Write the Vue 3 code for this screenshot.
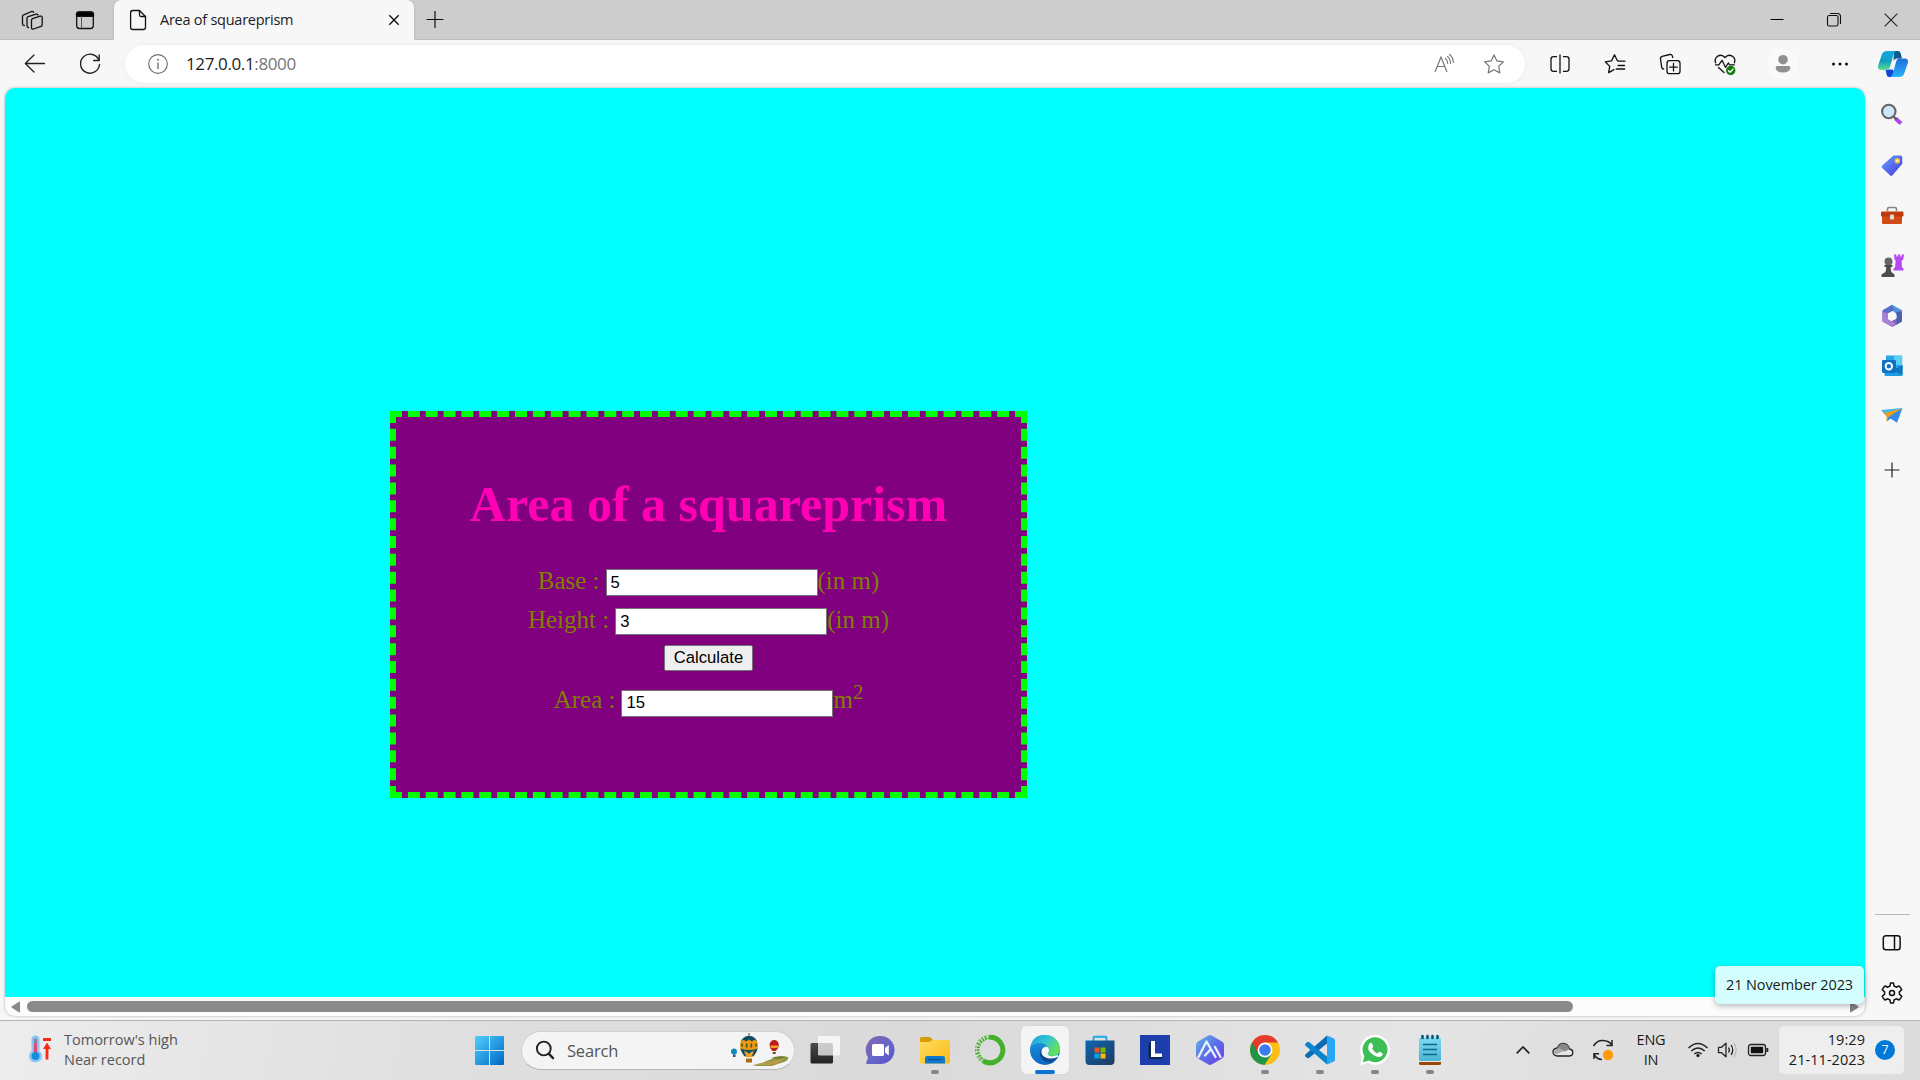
<script setup>
import { ref } from 'vue'

const base = ref('5')
const height = ref('3')
const area = ref('15')

function calculate() {
  area.value = String(Number(base.value) * Number(height.value))
}
</script>

<template>
  <div class="screen">
    <header class="titlebar">
      <div class="cell cell-ws">
        <svg width="32" height="32" fill="none" stroke="#111" stroke-width="1.3" stroke-linejoin="round" stroke-linecap="round">
          <path d="M16.500 14.700L24.200 12.200q2-.5 2 1.200v7.300q0 1.200-1.200 1.600L17.500 25q-2 .5-2-1.200V16.500q0-1.300 1-1.800Z" />
          <path d="M12.500 23.500q-1.500 0-1.500-1.500v-7.700q0-1.200 1.200-1.600l7.800-2.500q1.500-.3 2 .8" />
          <path d="M8.300 21.500q-1.800 0-1.800-1.500v-7.500q0-1.200 1.200-1.600L15.500 7.500q1.500-.3 2 .8" />
        </svg>
      </div>
      <div class="cell cell-tabs">
        <svg width="32" height="32" fill="none" stroke="#111" stroke-width="1.300">
          <rect x="7.700" y="8.200" width="16.600" height="16.300" rx="2.800" />
          <path d="M7.500 12.300V10.500q0-2.500 2.500-2.500h12q2.500 0 2.500 2.500v1.800z" fill="#000" />
          <path d="M12.500 12v12.500" stroke="#555" stroke-width="1" />
        </svg>
      </div>
      <div class="tab">
        <svg width="18" height="22" fill="none" stroke="#111" stroke-width="1.300" stroke-linejoin="round">
          <path d="M3.800 1.500H10.500L16.500 7.500V18.300q0 2.200-2.200 2.200H3.800q-2.200 0-2.200-2.200V3.700q0-2.200 2.200-2.200ZM10.500 1.700V6q0 1.500 1.500 1.500h4.300" />
        </svg>
        <span class="tab-title">Area of squareprism</span>
        <svg width="12" height="12" stroke="#111" stroke-width="1.400"><path d="M1.300 1.300l9.400 9.400M10.700 1.300L1.300 10.700" /></svg>
      </div>
      <div class="cell cell-new">
        <svg width="20" height="20" stroke="#111" stroke-width="1.200"><path d="M1.500 9.500h17M10 1v17" /></svg>
      </div>
      <div class="window-buttons">
        <div class="cell"><svg width="14" height="14" stroke="#000" stroke-width="1"><path d="M.5 6.500h13" /></svg></div>
        <div class="cell">
          <svg width="16" height="16" fill="none" stroke="#111" stroke-width="1.100"><rect x="1.500" y="3.500" width="10.500" height="10.500" rx="1.800" /><path d="M4 1.500h7.500q3 0 3 3V12" /></svg>
        </div>
        <div class="cell"><svg width="14" height="14" stroke="#222" stroke-width="1.100"><path d="M.7.7l12.600 12.600M13.300.7L.7 13.300" /></svg></div>
      </div>
    </header>

    <nav class="toolbar">
      <div class="cell">
        <svg width="32" height="32" fill="none" stroke="#222" stroke-width="1.300" stroke-linecap="round" stroke-linejoin="round"><path d="M25.500 15.500H6.500M15 7L6.300 15.500l8.700 8.500" /></svg>
      </div>
      <div class="cell">
        <svg width="32" height="32" fill="none" stroke="#222" stroke-width="1.400" stroke-linecap="round" stroke-linejoin="round"><path d="M25 12.500A9.500 9.500 0 1 0 25.500 16.500M25.200 7v5.500h-5.500" /></svg>
      </div>
      <div class="address">
        <svg width="22" height="22" fill="none" stroke="#707070" stroke-width="1.200"><circle cx="11" cy="11" r="9.300" /><path d="M11 9.500V16" stroke-width="1.400" /><circle cx="11" cy="6.700" r="1" fill="#707070" stroke="none" /></svg>
        <span class="url">127.0.0.1<span class="port">:8000</span></span>
        <svg class="read" width="22" height="22" fill="none" stroke="#767676" stroke-width="1.200" stroke-linecap="round"><path d="M2.200 18.500L8 4l5.800 14.500M4.200 13.500h7.700" /><path d="M12.500 5.500q2.200 1.800 2.300 5M14.500 3.500q3 2.400 3 7M16.500 1.500q3.800 2.700 3.800 8" stroke-width="1.100" /></svg>
        <svg width="22" height="22" fill="none" stroke="#767676" stroke-width="1.200" stroke-linejoin="round"><path d="M11 2l2.900 5.900 6.500.9-4.700 4.600 1.100 6.500L11 16.800 5.200 19.900l1.100-6.500L1.600 8.800l6.500-.9z" /></svg>
      </div>
      <div class="cell split">
        <svg width="32" height="32" fill="none" stroke="#111" stroke-width="1.300"><path d="M13 8.700H9.500q-2.500 0-2.500 2.500v9.600q0 2.500 2.500 2.500H13M19 8.700h3.500q2.500 0 2.500 2.500v9.600q0 2.500-2.500 2.500H19M16 6.500v19" /></svg>
      </div>
      <div class="cell">
        <svg width="32" height="32" fill="none" stroke="#111" stroke-width="1.300" stroke-linejoin="round" stroke-linecap="round"><path d="M15 21.600l-5.300 3 1-6.200L6.300 13.800l6.200-.9L15.500 6.800l2.500 5.200 1.200 1.200H26M19.200 17.500h6.300M17.200 21h8.500" /></svg>
      </div>
      <div class="cell">
        <svg width="32" height="32" fill="none" stroke="#111" stroke-width="1.300" stroke-linecap="round"><rect x="13" y="12.700" width="13" height="13" rx="2.500" /><path d="M19.500 15.500v7.400M15.800 19.200h7.400M9.700 21q-1.700 0-2-1.700L6.500 11q-.3-2.200 1.700-2.700l7.600-1.800q2-.3 2.600 1.600l.4 1.400" /></svg>
      </div>
      <div class="cell">
        <svg width="32" height="32" fill="none" stroke="#111" stroke-width="1.300" stroke-linejoin="round" stroke-linecap="round"><path d="M6.600 14.800C4.500 9 11.500 4.500 16 9.500 20.500 4.500 27.500 9 25.400 14.800M6.500 16.800h3.300l3.200-4.500 3.500 7 2.800-4.300 1.300 1.800h4.800M9.500 19.500l5.500 5" /><circle cx="21.700" cy="22.500" r="4.700" fill="#107c10" stroke="none" /><path d="M19.500 22.700l1.600 1.500 2.900-3" stroke="#fff" /></svg>
      </div>
      <div class="cell avatar">
        <svg width="30" height="30"><circle cx="15" cy="15" r="14" fill="#f9f9f9" stroke="#fff" /><circle cx="15" cy="10.700" r="4.800" fill="#909090" /><path d="M9 17h12q1.500 0 1.300 2-.8 4.500-7.300 4.500T7.700 19q-.2-2 1.300-2z" fill="#909090" /></svg>
      </div>
      <div class="cell dots"><svg width="20" height="6" fill="#111"><circle cx="3.500" cy="3" r="1.500" /><circle cx="10" cy="3" r="1.500" /><circle cx="16.500" cy="3" r="1.500" /></svg></div>
      <div class="cell copilot">
        <svg width="32" height="28">
          <defs>
            <linearGradient id="cpA" x1="0" y1="0" x2="0" y2="1"><stop offset="0" stop-color="#16a6e0" /><stop offset=".55" stop-color="#129fc0" /><stop offset="1" stop-color="#5fdd8c" /></linearGradient>
            <linearGradient id="cpB" x1="0" y1="0" x2="0" y2="1"><stop offset="0" stop-color="#1c6fd8" /><stop offset="1" stop-color="#2bb4fb" /></linearGradient>
          </defs>
          <path d="M17 1h4q2 0 2.600 2L25 8.500h-5.500q-2 0-3 2.500z" fill="#0a5c91" />
          <path d="M8.500 19.500h7l3 4-2 3.500h-4.500q-1.800 0-2.300-2z" fill="#1646d8" />
          <path d="M10 1h8.500q-1.300 1-2 3.500L13 17q-.8 3-3 3H4.500Q0 20 1.200 15.500L4.800 4.500Q6 1 10 1z" fill="url(#cpA)" />
          <path d="M22 8.500h5.500q4.500 0 3.300 4.500l-3.600 10.500Q26 27 22 27h-8.500q1.500-1 2.300-3.500L19.200 11.500q.8-3 2.800-3z" fill="url(#cpB)" />
        </svg>
      </div>
    </nav>

    <main class="body">
      <section class="viewport">
        <div class="page">
          <form class="box" @submit.prevent="calculate">
            <h1>Area of a squareprism</h1>
            <div class="row row-base"><span class="label">Base :</span><input v-model="base" /><span>(in m)</span></div>
            <div class="row row-height"><span class="label">Height :</span><input v-model="height" /><span>(in m)</span></div>
            <div class="row row-button"><button type="submit">Calculate</button></div>
            <div class="row row-area"><span class="label">Area :</span><input v-model="area" /><span>m<sup>2</sup></span></div>
          </form>
        </div>
        <div class="scrollbar">
          <svg width="9" height="12" fill="#8a8a8a"><path d="M9 .5v11L7.500 11 .5 6.500v-1L7.500 1z" /></svg>
          <div class="thumb"></div>
          <svg width="9" height="12" fill="#83838a"><path d="M0 .5v11L1.500 11l7-4.500v-1L1.500 1z" /></svg>
        </div>
      </section>

      <aside class="sidebar">
        <div class="cell"><svg width="24" height="24">
          <path d="M15.500 15.500l5.500 5" stroke="#b244f0" stroke-width="4" /><path d="M13.500 13.500l3 3" stroke="#555" stroke-width="2" /><circle cx="8.800" cy="8.500" r="6.700" fill="#cfe6fa" stroke="#666" stroke-width="2.100" /></svg></div>
        <div class="cell"><svg width="24" height="24">
          <defs><linearGradient id="tg" x1="0" y1="0" x2="1" y2="1"><stop offset="0" stop-color="#6aa2ff" /><stop offset="1" stop-color="#4238e0" /></linearGradient></defs>
          <path d="M13.500 1.500h6.800q2 0 2 2v6.300L12.500 21.300q-1.300 1.200-2.500 0L2.200 14q-1.300-1.300 0-2.500z" fill="url(#tg)" /><circle cx="17.300" cy="6.700" r="2" fill="#f5f5ff" stroke="#f0c420" stroke-width="1.600" /></svg></div>
        <div class="cell"><svg width="24" height="24">
          <path d="M7.500 7V5q0-1.500 1.500-1.500h6q1.500 0 1.500 1.500v2" fill="none" stroke="#868686" stroke-width="1.600" /><rect x="2" y="9" width="20" height="11" rx="1.300" fill="#d24a16" /><rect x="1" y="7.500" width="22.500" height="5" rx="1.200" fill="#c0390d" /><rect x="10" y="10.500" width="4" height="5" rx="1" fill="#ddd" /></svg></div>
        <div class="cell"><svg width="24" height="24">
          <path d="M14 .5h2.300v2h1.500v-2h2.300v2h1.500v-2H24l-.8 5-1.700 1.300.5 6.700 1.500 1v2H13.500v-2l1.500-1 .7-6.700L14.500 5.500z" fill="#b548f2" /><circle cx="8.500" cy="7.500" r="4" fill="#666" /><path d="M4.500 11h8v1.500l-2 1 .8 4.500 3.200 2.500V23H1.500v-2.500L5.500 18l.9-4.500-2-1z" fill="#4c4c4c" /></svg></div>
        <div class="cell"><svg width="24" height="24">
          <path d="M12 .8L21.700 6v8.300l-5.400-3-3.500-5L7 9.500v-5z" fill="#4d96df" /><path d="M12 .8L2.500 6.200v10.500L7.500 19.200V9.500L14.500 6z" fill="#5a6ecb" /><path d="M21.900 6.500v11L12.500 22.900 3 17.500l5-1.500 3.500 1.300 5.400-3V7.700z" fill="#8065bb" /><path d="M2.200 8v9.500L12 22.900l3.500-3.300L8 15.300V9z" fill="#a880d5" /><path d="M21.900 8v9.500L16.500 20.700V8z" fill="#4a62ad" /><circle cx="12.500" cy="12" r="4" fill="#f7f7f7" /></svg></div>
        <div class="cell"><svg width="24" height="24">
          <path d="M6 1.500h15.500q.7 0 .7.700V20H6z" fill="#28a8ea" /><path d="M14 2h8v9h-8z" fill="#5bd0f6" /><path d="M4.500 11l9.500 4 8.500-4v10q0 1-1 1h-16q-1 0-1-1z" fill="#1b9ce5" /><path d="M12 16.500l10.500-5.500V21z" fill="#1278be" /><rect x="2" y="6" width="14" height="13" rx="1.400" fill="#0f70c5" /><circle cx="8.800" cy="12.300" r="3.200" fill="none" stroke="#fff" stroke-width="2" /></svg></div>
        <div class="cell"><svg width="24" height="24">
          <path d="M1 6l21.500-2L7 13z" fill="#44b6f2" /><path d="M1 6l5.500 5.500V18l3-4 12-9.500L5 9z" fill="#f49d12" /><path d="M22.500 4L17 18.800l-6.500-4.300-3.500 3 1.500-4.500z" fill="#3389f0" /></svg></div>
        <div class="cell plus"><svg width="16" height="16" stroke="#222" stroke-width="1.200"><path d="M.5 8h15M8 .5v15" /></svg></div>
        <div class="spacer"></div>
        <div class="divider"></div>
        <div class="cell pane"><svg width="22" height="18" fill="none" stroke="#111" stroke-width="1.500"><rect x="2.300" y="1.800" width="16.800" height="14" rx="2.500" /><path d="M13.500 2v14" /></svg></div>
        <div class="cell gear"><svg width="24" height="24" fill="none" stroke="#111" stroke-width="1.500" stroke-linejoin="round"><circle cx="12" cy="12" r="2.500" /><path d="M10 5l.5-3h3l.5 3 2.200 1.200 2.800-1.200 1.500 1.500 1.200 2.200-2.300 2.200v2.200l2.300 2.200-1.200 2.200-1.500 1.500-2.800-1.200L14 19l-.5 3h-3L10 19l-2.200-1.200L5 19l-1.500-1.500-1.200-2.200 2.300-2.200v-2.200L2.300 8.700l1.200-2.200L5 5l2.800 1.200z" /></svg></div>
      </aside>
    </main>

    <footer class="taskbar">
      <div class="weather">
        <svg width="24" height="30">
          <path d="M3.500 5.500a4 4 0 0 1 8 0V17a6.500 6.500 0 1 1-8 0z" fill="#8fc4f7" /><path d="M7.500 7v13" stroke="#e24a70" stroke-width="3.200" stroke-linecap="round" /><path d="M7.500 4.500v5" stroke="#8a83a8" stroke-width="3.200" /><circle cx="7.500" cy="22" r="4" fill="#148fdd" /><path d="M15 5.500h8M19 25.500V13" stroke="#fb2a14" stroke-width="2.800" stroke-linecap="butt" /><path d="M19 8.500l4 6.500h-8z" fill="#fb2a14" />
        </svg>
        <div class="weather-text"><span>Tomorrow's high</span><span>Near record</span></div>
      </div>

      <div class="start">
        <svg width="29" height="29">
          <defs><linearGradient id="win" gradientUnits="userSpaceOnUse" x1="0" y1="0" x2="29" y2="29"><stop offset="0" stop-color="#4fd0fd" /><stop offset="1" stop-color="#0067c4" /></linearGradient></defs>
          <path d="M1 0h13v14H0V1q0-1 1-1zM15 0h13q1 0 1 1v13H15zM0 15h14v14H1q-1 0-1-1zM15 15h14v13q0 1-1 1H15z" fill="url(#win)" />
        </svg>
      </div>

      <div class="search">
        <svg width="20" height="20" fill="none" stroke="#222" stroke-width="1.900" stroke-linecap="round"><circle cx="8.800" cy="8.500" r="6.900" /><path d="M13.700 13.700l4.300 4.500" stroke-width="2.400" /></svg>
        <span>Search</span>
        <svg class="balloons" width="58" height="34">
          <path d="M18 33q9 0 15-4l10-4q8-3 14-1 1 3-4 5l-12 4z" fill="#8c9b3f" /><path d="M30 30q12-1 24-6-5 7-14 8H22z" fill="#b99a4a" /><path d="M40 25q8-3 15-1l-6 2z" fill="#6f7a2e" />
          <circle cx="3" cy="18.500" r="3" fill="#1686c0" /><path d="M2 21.500h2.500V24H2z" fill="#1a5a88" />
          <path d="M9 12.500a9 9.500 0 0 1 18 0q0 5-5 11.500h-8q-5-6.500-5-11.500z" fill="#f0960f" /><path d="M10 8.500Q12 3 18 3t8 5.500l-2.500-2-2.500 2-3-2-3 2-2.500-2z" fill="#0b4b63" /><path d="M9.300 15.500q9 3 17.400 0-1 4-4 7.500h-9.400q-3-3.500-4-7.500z" fill="#0d5169" /><path d="M13 18l2 5h6l2-5-2.500.8-2.500 2-2.500-2z" fill="#f0a020" /><path d="M11 10.500v3M15.700 10.500v4M20.300 10.500v4M25 10.500v3" stroke="#376329" stroke-width="1.600" /><path d="M18 0v3" stroke="#443" /><path d="M15 25.500h6v4h-6z" fill="#a86c12" />
          <path d="M38.500 12a4.700 5 0 0 1 9.400 0q0 3-3 6h-3.500q-3-3-2.900-6z" fill="#b91d1d" /><path d="M39 12.500h8.500l-1 2.500h-6.600z" fill="#f0a120" /><path d="M41.700 19h3v2h-3z" fill="#8c3a20" />
        </svg>
      </div>

      <div class="apps">
        <div class="app"><svg width="32" height="32">
          <defs><linearGradient id="tv" x1="0" y1="0" x2="0" y2="1"><stop offset="0" stop-color="#4a4a48" /><stop offset="1" stop-color="#222" /></linearGradient></defs>
          <rect x="1.500" y="9" width="22.500" height="20.500" rx="1.500" fill="url(#tv)" /><rect x="9" y="2" width="22" height="19.500" rx="1.200" fill="#fff" opacity=".72" /></svg></div>
        <div class="app"><svg width="32" height="32">
          <defs><linearGradient id="ch" x1="0" y1="0" x2="1" y2="1"><stop offset="0" stop-color="#8a62a8" /><stop offset=".5" stop-color="#6668c8" /><stop offset="1" stop-color="#5b50d0" /></linearGradient></defs>
          <path d="M16.500 2a14 14 0 1 1 0 28H3q-1.300-.3-.8-1.500L4 23.500A14 14 0 0 1 16.500 2z" fill="url(#ch)" /><rect x="8" y="10" width="12" height="12" rx="1.600" fill="#fff" /><path d="M21 14l3.800-3v10.500L21 18.500z" fill="#fff" /></svg></div>
        <div class="app running"><svg width="32" height="32">
          <defs><linearGradient id="fo" x1="0" y1="0" x2="1" y2="1"><stop offset="0" stop-color="#ffdc60" /><stop offset="1" stop-color="#fbb914" /></linearGradient></defs>
          <path d="M1 4.500Q1 3 2.500 3h7.700q1.200 0 2 1.200L14 6l-2 3H1z" fill="#d99a06" /><path d="M1 8h9.700l2.800-2H30q1 0 1 1v21q0 1.500-1.500 1.500h-27Q1 29.500 1 28z" fill="url(#fo)" /><path d="M6 29.500V24q0-2 2-2h16q2 0 2 2v5.500z" fill="#0e79cf" /><path d="M9.500 25.500h13" stroke="#0a4e94" stroke-width="1.200" /></svg></div>
        <div class="app"><svg width="32" height="32" fill="none">
          <path d="M16 3.200a12.800 12.800 0 1 1-6.500 23.800" stroke="#44b02c" stroke-width="5" /><path d="M16 3.200A12.800 12.800 0 0 0 9.500 27" stroke="#44b02c" stroke-width="4.500" stroke-dasharray="2 1.200" /><path d="M15 2.500A13.500 13.500 0 0 0 8 27" stroke="#dedede" stroke-width="1" stroke-dasharray="3 2" /></svg></div>
        <div class="app active"><svg width="32" height="32">
          <defs>
            <linearGradient id="e1" x1="0" y1="0" x2="1" y2=".5"><stop offset="0" stop-color="#1e9bd8" /><stop offset=".5" stop-color="#2fc3d8" /><stop offset="1" stop-color="#62e25c" /></linearGradient>
            <linearGradient id="e2" x1="0" y1="0" x2="0" y2="1"><stop offset="0" stop-color="#1a9be0" /><stop offset="1" stop-color="#0b68c4" /></linearGradient>
          </defs>
          <circle cx="16" cy="16" r="15" fill="url(#e2)" /><path d="M12 15q-3 5 1 10t10 3q5-3 6-6-5 3-10 1.500t-4.500-6z" fill="#0d4c93" /><path d="M1.300 14Q3 1 16 1q13 .5 15 13 .2 8-7.500 8-6 0-5-3 2-1.500 1-4Q17.500 9 11 9 4.500 9 1.300 14z" fill="url(#e1)" /><path d="M16.700 12.500q-4.500 1.500-4.300 5.500.3 4.500 5.600 6 6 1.500 12-1.500L28.800 21q-6 2.200-9.300.2-1.700-1.200-.3-2.400 1.800-2.800-.2-5.600z" fill="#f6f7f8" /></svg></div>
        <div class="app"><svg width="32" height="32">
          <defs><linearGradient id="st" x1="0" y1="0" x2="1" y2="1"><stop offset="0" stop-color="#0b66b0" /><stop offset="1" stop-color="#223a62" /></linearGradient></defs>
          <path d="M9.500 8V3.800q0-1 1-1h11q1 0 1 1V8" fill="none" stroke="#20a8ec" stroke-width="1.900" /><path d="M1.500 6.500h29V27q0 4-4 4h-21q-4 0-4-4z" fill="url(#st)" /><path d="M10.500 13.500h5v5h-5z" fill="#f25022" /><path d="M16.500 13.500h5v5h-5z" fill="#7fba00" /><path d="M10.500 19.500h5v5h-5z" fill="#00a4ef" /><path d="M16.500 19.500h5v5h-5z" fill="#ffb900" /></svg></div>
        <div class="app"><svg width="32" height="32"><rect x="1" y="1" width="30" height="30" fill="#1d3eac" /><path d="M12 7l-2.500 3v15h13l1.500-2H12z" fill="#10284e" /><path d="M12 7h4v12.500h7V23H12z" fill="#fff" /></svg></div>
        <div class="app"><svg width="32" height="32">
          <defs><linearGradient id="ai" x1="0" y1="0" x2="1" y2="1"><stop offset="0" stop-color="#65b3e8" /><stop offset=".5" stop-color="#5a70e8" /><stop offset="1" stop-color="#7436e8" /></linearGradient></defs>
          <path d="M14 1.700q2-1.200 4 0l10 5.800q2 1.200 2 3.300v10.500q0 2-2 3.200l-10 5.800q-2 1.200-4 0L4 24.500q-2-1.200-2-3.200V10.800Q2 8.700 4 7.500z" fill="url(#ai)" /><path d="M4.500 23L12.500 7.500 21.500 23M11 21.500l5.500-6M21 13l5.500 10" fill="none" stroke="#e8f2ff" stroke-width="2.300" stroke-linejoin="round" stroke-linecap="round" /></svg></div>
        <div class="app running"><svg width="32" height="32">
          <circle cx="16" cy="16" r="15" fill="#fbbf16" /><path d="M16 16L3 8.500a15 15 0 0 0 12.500 22.500L22.500 20z" fill="#1f9547" /><path d="M3 8.500A15 15 0 0 1 29 8.500H16l-6.500 11.300z" fill="#e33b2e" /><circle cx="16" cy="16" r="7.400" fill="#fff" /><circle cx="16" cy="16" r="5.800" fill="#3b7ded" /></svg></div>
        <div class="app running"><svg width="32" height="32">
          <path d="M23 1.500L30 4.500q1 .5 1 1.700v19.600q0 1.200-1 1.700l-7 3z" fill="#2aa6f2" /><path d="M23 1.500v8L5 24q-1 .7-1.800 0L1.300 22.200q-.7-.8 0-1.600z" fill="#0a6db8" /><path d="M23 30.500v-8L5 8q-1-.7-1.800 0L1.300 9.800q-.7.8 0 1.600z" fill="#0c84cc" /></svg></div>
        <div class="app running"><svg width="32" height="32">
          <path d="M1 31l2-8A15 15 0 1 1 9 29z" fill="#fff" /><path d="M3.800 28.200l1.600-6A12.500 12.500 0 1 1 10 26.600z" fill="#3cbf54" /><path d="M10.500 9.500q1.500-1.500 2.500 0l1.200 2.700q.2.800-1.200 2.300 2 3.500 5.500 5 1.500-2 2.300-1.700l2.700 1.500q1 1-1 3-2 1.200-5 .2-6-2.500-8.200-7-.800-3.500 1.200-6z" fill="#fff" /></svg></div>
        <div class="app running"><svg width="32" height="32">
          <defs><linearGradient id="np" x1="0" y1="0" x2="0" y2="1"><stop offset="0" stop-color="#7edaf2" /><stop offset="1" stop-color="#49b5d4" /></linearGradient></defs>
          <path d="M5 27h22v2.500q0 1.500-1.500 1.500h-19Q5 31 5 29.500z" fill="#97490c" /><path d="M5 26h22v2H5z" fill="#f2e6dc" /><rect x="5" y="3.500" width="22" height="23.500" rx="1.500" fill="url(#np)" /><path d="M8.500 2v2M13.500 2v2M18.500 2v2M23.500 2v2" stroke="#07597a" stroke-width="2.600" stroke-linecap="round" /><path d="M9 10.500h14M9 15.500h14M9 20.500h14" stroke="#0b6a8c" stroke-width="1.700" /></svg></div>
      </div>

      <div class="tray">
        <div class="cell"><svg width="16" height="10" fill="none" stroke="#222" stroke-width="1.700"><path d="M1.700 8.300L8 2l6.300 6.300" /></svg></div>
        <div class="cell"><svg width="22" height="16">
          <path d="M5.500 14h12q3.300-.3 3.300-3.500 0-3-3.300-3.500Q16 2 11.500 1.500 7 1.500 5.500 6 1 6.500 1 10q.2 3.700 4.500 4z" fill="#e4e4e4" stroke="#222" stroke-width="1.300" /><path d="M5.500 6Q7 1.500 11.500 1.500 16 2 17.500 7L13 9.500z" fill="#888" /><path d="M2 9.500q1-3 4.300-3L12 9l-9 3.800z" fill="#aaa" /></svg></div>
        <div class="cell"><svg width="22" height="22" fill="none" stroke="#222" stroke-width="1.500"><path d="M1.500 7Q5 1.200 11 1.500t9 4.500M20 1v5.500h-5.500M2 20v-5.200h5M2 15.500Q5 20.500 10 20.500" /><circle cx="16" cy="16" r="5.200" fill="#ff9a0a" stroke="none" /></svg></div>
        <div class="lang"><span>ENG</span><span>IN</span></div>
        <div class="cell small"><svg width="22" height="16" fill="none" stroke="#222" stroke-width="1.500"><path d="M1.500 6q9.500-9 19 0M4.300 9q6.700-6 13.400 0M7.300 12q3.700-3 7.400 0" /><circle cx="11" cy="13.500" r="1.700" fill="#222" stroke="none" /></svg></div>
        <div class="cell small"><svg width="22" height="18" fill="none" stroke="#222" stroke-width="1.300" stroke-linejoin="round"><path d="M1.500 6.300h3L9 2.200v13.600L4.500 11.700h-3z" /><path d="M11.500 6.500q1.700 2.500 0 5M14 4q3.500 5 0 10" /><path d="M16.700 2q5 7 0 14" stroke="#bbb" /></svg></div>
        <div class="cell small"><svg width="22" height="14" fill="none" stroke="#222" stroke-width="1.300"><rect x="1.500" y="1.500" width="17" height="11" rx="2.500" /><rect x="3.800" y="3.700" width="12.400" height="6.600" rx=".8" fill="#111" stroke="none" /><path d="M20.300 5v4" stroke-width="2" /></svg></div>
        <div class="clock">
          <div class="clock-text"><span>19:29</span><span>21-11-2023</span></div>
          <span class="badge">7</span>
        </div>
      </div>
    </footer>

    <div class="tooltip">21 November 2023</div>
  </div>
</template>

<style>
body {
  margin: 0;
  overflow: hidden;
}
</style>

<style scoped>
.screen {
  position: relative;
  width: 1920px;
  height: 1080px;
  display: flex;
  flex-direction: column;
  overflow: hidden;
  background: #f7f7f7;
  color: #1b1b1b;
  font-family: "Open Sans", "Noto Sans", sans-serif;
}
.screen svg {
  display: block;
  flex: none;
}
.cell {
  display: flex;
  align-items: center;
  justify-content: center;
  flex: none;
}

/* title bar */
.titlebar {
  height: 40px;
  display: flex;
  align-items: center;
  background: #cdcdcd;
  box-shadow: inset 0 -1px 0 #bdbdbd;
}
.cell-ws { width: 53px; margin-left: 5px; }
.cell-tabs { width: 53px; }
.tab {
  width: 300px;
  height: 40px;
  box-sizing: border-box;
  margin-left: 3px;
  padding: 0 14px 0 15px;
  display: flex;
  align-items: center;
  border-radius: 7px 7px 0 0;
  background: #f7f7f7;
  box-shadow: 0 0 3px rgba(0, 0, 0, 0.15);
  clip-path: inset(0 -3px 0 -3px);
}
.tab-title {
  flex: 1;
  margin-left: 13px;
  font-size: 14.5px;
  line-height: 20px;
  letter-spacing: -0.25px;
  white-space: nowrap;
}
.cell-new { width: 42px; }
.window-buttons {
  margin-left: auto;
  margin-right: 1px;
  display: flex;
}
.window-buttons .cell { width: 57px; height: 40px; }

/* toolbar */
.toolbar {
  height: 48px;
  display: flex;
  align-items: center;
  padding-left: 7px;
}
.toolbar .cell { width: 55px; height: 46px; }
.address {
  flex: none;
  width: 1400px;
  height: 38px;
  box-sizing: border-box;
  margin: 0 7px 0 8px;
  padding: 0 20px 0 22px;
  display: flex;
  align-items: center;
  border-radius: 19px;
  background: #fff;
  box-shadow: 0 0 4px rgba(0, 0, 0, 0.06);
}
.url {
  flex: 1;
  margin-left: 17px;
  font-size: 17px;
  line-height: 22px;
  letter-spacing: -0.38px;
}
.port { color: #767676; }
.read { margin-right: 28px; }
.toolbar .avatar { width: 61px; }
.toolbar .dots { width: 54px; }
.toolbar .copilot { width: 52px; }

/* body */
.body {
  height: 932px;
  display: flex;
}
.viewport {
  width: 1860px;
  height: 928px;
  margin-left: 5px;
  display: flex;
  flex-direction: column;
  overflow: hidden;
  border-radius: 10px;
  background: #fcfcfc;
  box-shadow: 0 0 3px rgba(0, 0, 0, 0.3);
}
.page {
  height: 909px;
  background: #00ffff;
  font-family: "Liberation Serif", serif;
}
.box {
  width: 637px;
  height: 387px;
  box-sizing: border-box;
  margin: 323px 0 0 385px;
  border: 6px dashed #00ff00;
  background: #800080;
  color: #808000;
  font-size: 25px;
  display: flow-root;
}
h1 {
  margin: 58px 0 0;
  height: 58px;
  font-size: 50px;
  line-height: 58px;
  font-weight: bold;
  text-align: center;
  color: #ff00b4;
  white-space: nowrap;
}
.row {
  display: flex;
  align-items: baseline;
  justify-content: center;
  height: 29px;
  line-height: 29px;
  white-space: nowrap;
}
.row-base { margin-top: 33px; }
.row-height { margin-top: 10px; }
.row-button { margin-top: 11px; }
.row-area { margin-top: 11px; }
.label { margin-right: 6px; }
sup { line-height: 0; font-size: 20.8px; }
input {
  width: 212px;
  height: 27px;
  box-sizing: border-box;
  margin: 0;
  padding: 1px 3px 1px 4px;
  border: 1px solid #767676;
  border-radius: 0;
  outline: none;
  background: #fff;
  color: #000;
  font: 16.67px "Liberation Sans", sans-serif;
}
.row-base input,
.row-height input {
  padding-bottom: 0;
  padding-top: 2px;
  margin-bottom: 0;
  transform: translateY(-1px);
}
button {
  width: 89px;
  height: 26px;
  margin: 0;
  padding: 0;
  border: 1px solid #767676;
  border-radius: 2px;
  background: #efefef;
  color: #000;
  font: 16.67px "Liberation Sans", sans-serif;
}
.scrollbar {
  height: 19px;
  display: flex;
  align-items: center;
  padding: 0 6px;
}
.thumb {
  width: 1546px;
  height: 11px;
  margin: 0 auto 0 7px;
  border-radius: 6px;
  background: #8a8a8a;
}

/* sidebar */
.sidebar {
  width: 54px;
  display: flex;
  flex-direction: column;
  align-items: center;
}
.sidebar .cell { width: 50px; height: 50px; }
.sidebar .cell:first-child { height: 53px; }
.sidebar .plus { height: 58px; }
.spacer { flex: 1; }
.divider {
  width: 35px;
  height: 1px;
  background: #b9b9b9;
}
.sidebar .pane { height: 55px; }
.sidebar .gear { height: 46px; margin-bottom: 4px; }

/* taskbar */
.taskbar {
  height: 60px;
  box-sizing: border-box;
  padding-bottom: 1px;
  display: flex;
  align-items: center;
  border-top: 1px solid #b3b3b3;
  background: linear-gradient(100deg, #ededed 0, #e7e7e7 180px, #dfdfdf 450px, #dadada 900px, #dfdfdf 1150px, #e5e5e5 1400px, #dfdfdf 1550px, #dcdcdc 1920px);
}
.weather {
  width: 446px;
  padding-left: 28px;
  display: flex;
  align-items: center;
  flex: none;
}
.weather svg { margin-top: -3px; }
.weather-text {
  margin-left: 12px;
  margin-top: -1px;
  display: flex;
  flex-direction: column;
  font-size: 14.500px;
  line-height: 20px;
  color: #555;
}
.start { margin-left: 1px; }
.search {
  width: 274px;
  height: 39px;
  box-sizing: border-box;
  margin: 0 0 0 17px;
  padding: 0 5px 0 13px;
  flex: none;
  display: flex;
  align-items: center;
  border-radius: 20px;
  border: 1px solid #d0d0d0;
  border-bottom-color: #b5b5b5;
  background: #f4f4f4;
  font-size: 16.500px;
  letter-spacing: -0.2px;
  color: #555;
}
.search span { margin-left: 12px; }
.balloons { margin-left: auto; }
.apps {
  margin-left: 6px;
  display: flex;
  gap: 7px;
}
.app {
  position: relative;
  width: 48px;
  height: 48px;
  box-sizing: border-box;
  display: flex;
  align-items: center;
  justify-content: center;
  border-radius: 5px;
}
.app.active {
  background: #f4f4f4;
  box-shadow: 0 0 1px #aaa;
}
.app.running::after,
.app.active::after {
  content: "";
  position: absolute;
  left: 20px;
  bottom: 0;
  width: 8px;
  height: 4px;
  border-radius: 2px;
  background: #858585;
}
.app.active::after {
  left: 14px;
  width: 20px;
  background: #0a74d2;
}
.tray {
  margin-left: auto;
  margin-right: 16px;
  display: flex;
  align-items: center;
}
.tray .cell { width: 40px; height: 48px; }
.tray .small { width: 30px; }
.lang {
  width: 56px;
  margin-right: 4px;
  margin-top: -1px;
  display: flex;
  flex-direction: column;
  align-items: center;
  font-size: 14.500px;
  line-height: 20px;
  letter-spacing: -0.2px;
}
.clock {
  width: 125px;
  height: 48px;
  box-sizing: border-box;
  margin-left: 6px;
  padding-right: 9px;
  display: flex;
  align-items: center;
  justify-content: flex-end;
  border-radius: 5px;
  background: #eeeeee;
}
.clock-text {
  margin-top: -1px;
  display: flex;
  flex-direction: column;
  align-items: flex-end;
  font-size: 14.500px;
  line-height: 20px;
  white-space: nowrap;
  letter-spacing: 0.05px;
}
.badge {
  width: 20px;
  height: 20px;
  margin-left: 10px;
  border-radius: 50%;
  background: #0078d7;
  color: #fff;
  font-size: 12.500px;
  line-height: 20px;
  text-align: center;
}
.tooltip {
  position: absolute;
  left: 1715px;
  top: 966px;
  width: 149px;
  height: 38px;
  border-radius: 5px;
  background: #d4fdfd;
  box-shadow: 0 2px 6px rgba(0, 0, 0, 0.28);
  font-size: 14.500px;
  line-height: 37px;
  letter-spacing: -0.1px;
  text-align: center;
  white-space: nowrap;
}
</style>
